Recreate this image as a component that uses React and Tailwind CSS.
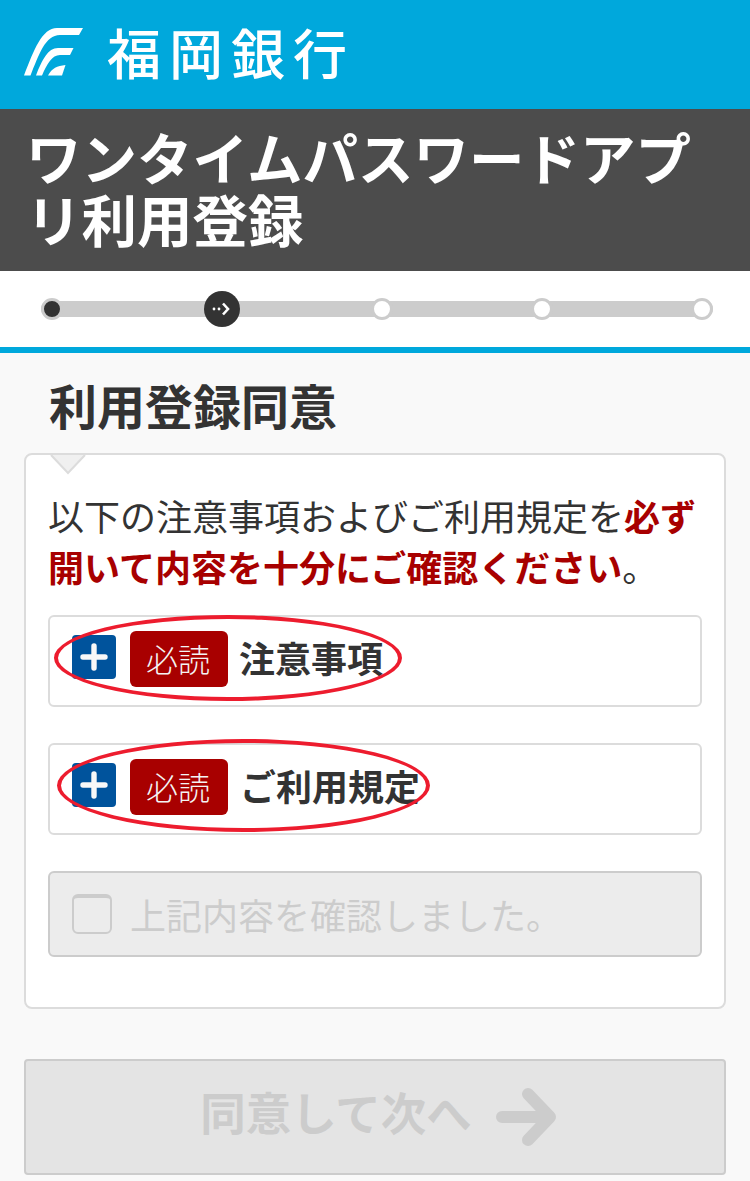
function Logo() {
  return (
    <svg viewBox="0 0 64 56" className="h-[56px] w-[64px] shrink-0" fill="#fff">
      <path d="M0 51.5H6.5C15 31 21 11 36 11H55L59 4H33C18 4 10 26 0 51.5Z" />
      <path d="M12 51.5H18C23 40 28 31 36 31H46L49.5 24H34C24 24 18 36 12 51.5Z" />
      <path d="M24 51.5H38L41.5 41C33 42 28 44 24 51.5Z" />
    </svg>
  );
}

function Plus() {
  return (
    <span className="mb-[4px] flex h-[44px] w-[44px] shrink-0 items-center justify-center rounded-[4px] bg-[#00539c]">
      <svg viewBox="0 0 28 28" className="h-[28px] w-[28px]" fill="none" stroke="#f8f8f8" strokeWidth="5.4" strokeLinecap="round">
        <path d="M14 3V25M3 14H25" />
      </svg>
    </span>
  );
}

function Accordion({ label, labelClass, ellipse }) {
  return (
    <div className="relative flex h-[92px] items-center rounded-[6px] border-2 border-[#dcdcdc] pb-[4px] pl-[22px]">
      <Plus />
      <span className="ml-[14px] flex h-[56px] w-[98px] shrink-0 items-center justify-center rounded-[6px] bg-[#a80000] pb-[3px] pr-[2px] text-[32px] font-light leading-none text-[#f4f4f4]">
        必読
      </span>
      <span className={`${labelClass} mb-[4px] text-[36px] font-bold leading-none text-[#333]`}>{label}</span>
      <div className={`absolute rounded-[50%] border-[4px] border-[#ed1c2e] ${ellipse}`} />
    </div>
  );
}

function Dot({ className }) {
  return <span className={`z-10 block h-[22px] w-[22px] shrink-0 rounded-full border-[3px] border-[#cccccc] ${className}`} />;
}

export default function App() {
  return (
    <div className="h-[1181px] w-[750px] overflow-hidden bg-[#f9f9f9] font-['Noto_Sans_CJK_JP','Noto_Sans_CJK_SC',sans-serif]">
      <header className="flex h-[109px] items-center bg-[#00a8dc] pb-[6px] pl-[24px]">
        <Logo />
        <span className="ml-[19px] text-[54px] font-medium leading-none tracking-[8px] text-white">福岡銀行</span>
      </header>

      <h1 className="h-[162px] bg-[#4c4c4c] px-[26px] pt-[16px] text-[55.5px] font-bold leading-[62px] text-white">
        ワンタイムパスワードアプリ利用登録
      </h1>

      <div className="relative flex h-[76px] items-center bg-white pl-[41px] pr-[37px]">
        <div className="absolute left-[41px] top-[30px] h-[16px] w-[672px] rounded-full bg-[#cccccc]" />
        <Dot className="mr-[141px] bg-[#333]" />
        <span className="z-10 mr-[131px] flex h-[36px] w-[36px] shrink-0 items-center justify-center rounded-full bg-[#333]">
          <svg viewBox="0 0 20 14" className="h-[14px] w-[20px]" fill="none" stroke="#fff" strokeWidth="2.6">
            <circle cx="2" cy="7" r="1.4" fill="#fff" stroke="none" />
            <circle cx="7" cy="7" r="1.4" fill="#fff" stroke="none" />
            <path d="M11 1.5L16 7L11 12.5" />
          </svg>
        </span>
        <Dot className="mr-[138px] bg-white" />
        <Dot className="mr-[138px] bg-white" />
        <Dot className="bg-white" />
      </div>

      <div className="h-[6px] bg-[#00a8dc]" />

      <main className="px-[24px]">
        <h2 className="pl-[25px] pt-[20px] text-[48px] font-bold leading-[62px] text-[#333]">利用登録同意</h2>

        <section className="relative mt-[18px] h-[556px] rounded-[8px] border-2 border-[#dcdcdc] bg-white px-[22px] pt-[35px]">
          <svg viewBox="0 0 36 22" className="absolute -top-[2px] left-[24px] h-[22px] w-[36px]">
            <path d="M1 2L18 20L35 2" fill="#f0f0f0" stroke="#dcdcdc" strokeWidth="2" />
          </svg>

          <p className="text-[36px] leading-[51px] text-[#333]">
            以下の注意事項およびご利用規定を
            <strong className="font-bold text-[#a80000]">必ず開いて内容を十分にご確認ください</strong>。
          </p>

          <div className="mt-[23px] flex flex-col gap-[36px]">
            <Accordion label="注意事項" labelClass="ml-[11px]" ellipse="left-[4px] -top-[2px] h-[86px] w-[348px]" />
            <Accordion label="ご利用規定" labelClass="ml-[12px]" ellipse="left-[7px] -top-[6px] h-[93px] w-[373px]" />
          </div>

          <div className="mt-[36px] flex h-[86px] items-center rounded-[6px] border-2 border-[#cccccc] bg-[#ececec] pl-[22px]">
            <span className="h-[40px] w-[40px] shrink-0 rounded-[6px] border-2 border-t-4 border-[#cccccc] bg-[#ececec]" />
            <span className="ml-[18px] text-[36px] leading-none text-[#cccccc]">上記内容を確認しました。</span>
          </div>
        </section>

        <button className="mt-[50px] flex h-[116px] w-full items-center justify-center rounded-[4px] border-2 border-[#cccccc] bg-[#e4e4e4] pl-[6px] text-[45.5px] font-bold leading-none text-[#cccccc]">
          <span className="mb-[10px]">同意して次へ</span>
          <svg viewBox="0 0 60 58" className="ml-[24px] h-[58px] w-[60px]" fill="none" stroke="#cccccc" strokeWidth="12" strokeLinecap="round" strokeLinejoin="round">
            <path d="M6 29H53M32 6L54 29L32 52" />
          </svg>
        </button>
      </main>
    </div>
  );
}
